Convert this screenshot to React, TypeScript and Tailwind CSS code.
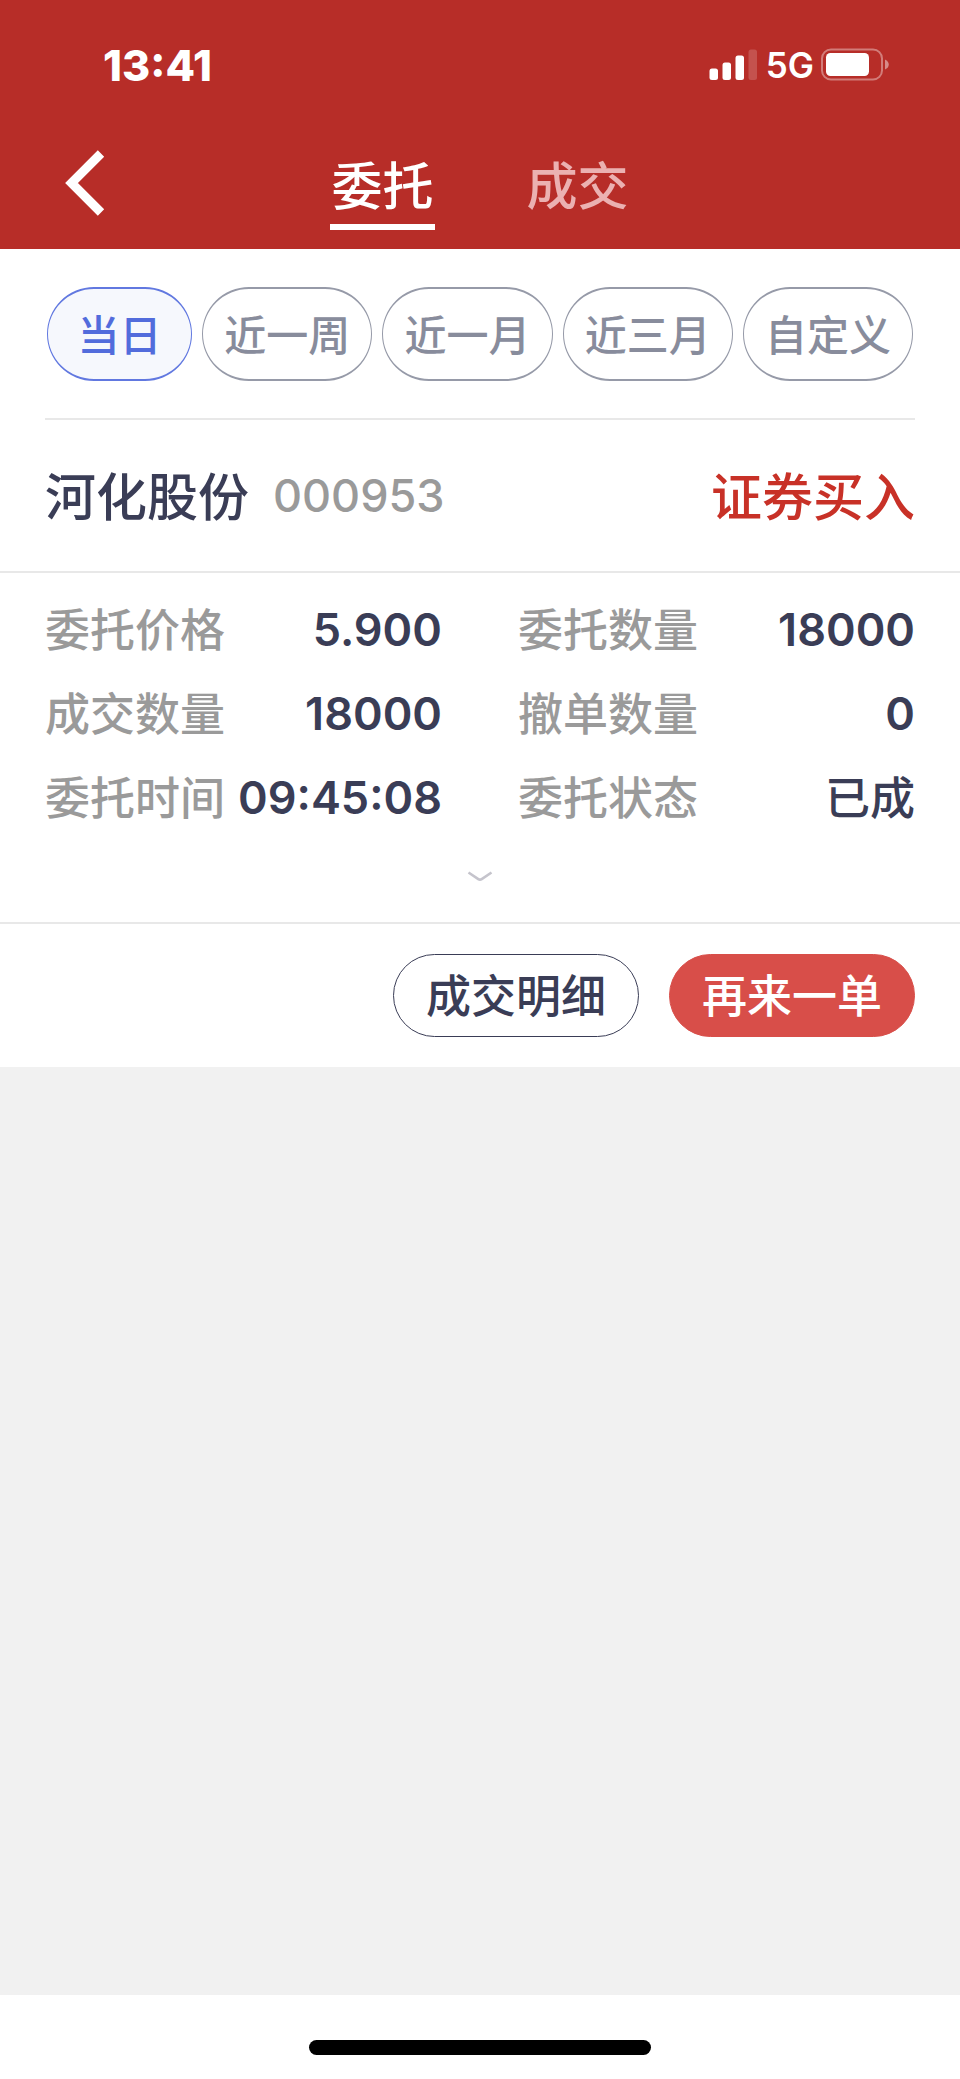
import { useState } from "react";
import clsx from "clsx";

const tabs = ["委托", "成交"];

const ranges = ["当日", "近一周", "近一月", "近三月", "自定义"];

const order = {
  name: "河化股份",
  code: "000953",
  side: "证券买入",
  status: "已成",
  details: [
    { label: "委托价格", value: "5.900" },
    { label: "委托数量", value: "18000" },
    { label: "成交数量", value: "18000" },
    { label: "撤单数量", value: "0" },
    { label: "委托时间", value: "09:45:08" },
  ],
};

function SignalIcon() {
  return (
    <svg width="48" height="32" viewBox="0 0 48 32" fill="#fff" aria-hidden="true">
      <rect x="0.5" y="19.5" width="8.5" height="11.5" rx="2.5" />
      <rect x="13.5" y="13.5" width="8.5" height="17.5" rx="2.5" />
      <rect x="26.5" y="6.5" width="8.5" height="24.5" rx="2.5" />
      <rect x="39.5" y="0.5" width="8.5" height="30.5" rx="2.5" opacity="0.18" />
    </svg>
  );
}

function BatteryIcon() {
  return (
    <svg width="69" height="34" viewBox="0 0 69 34" aria-hidden="true">
      <rect
        x="2"
        y="1.5"
        width="60"
        height="30"
        rx="9"
        fill="none"
        stroke="#fff"
        strokeOpacity="0.38"
        strokeWidth="2"
      />
      <rect x="6" y="5" width="43" height="23" rx="4.5" fill="#fff" />
      <path d="M65 11.500c5 2 5 8 0 10z" fill="#fff" fillOpacity="0.45" />
    </svg>
  );
}

function StatusBar() {
  return (
    <div className="flex h-[129px] items-center justify-between pl-[103px] pr-[71px]">
      <span className="text-[43px] font-extrabold leading-[48px]">13:41</span>
      <div className="flex items-center">
        <SignalIcon />
        <span className="ml-[9px] text-[35px] font-semibold leading-[40px]">5G</span>
        <span className="ml-1.5">
          <BatteryIcon />
        </span>
      </div>
    </div>
  );
}

function OrderCard() {
  const [expanded, setExpanded] = useState(false);

  return (
    <article className="bg-white">
      <div className="flex h-[153px] items-center justify-between border-b-2 border-[#e8e8e8] px-[45px] leading-[72px]">
        <div className="flex items-center gap-6">
          <h2 className="pt-1 text-[51px] text-[#3a3d56]">{order.name}</h2>
          <span className="text-[45px] text-[#9a9a9a]">{order.code}</span>
        </div>
        <span className="pt-1 text-[51px] text-[#c83127]">{order.side}</span>
      </div>

      <dl className="grid grid-cols-2 gap-x-[76px] px-[45px] pt-[15px] text-[45px]">
        {order.details.map((item) => (
          <div key={item.label} className="flex justify-between whitespace-nowrap">
            <dt className="pt-0.5 leading-[82px] text-[#9a9a9a]">{item.label}</dt>
            <dd className="font-semibold leading-[84px] text-[#3a3d56]">{item.value}</dd>
          </div>
        ))}
        <div className="flex justify-between whitespace-nowrap pt-0.5 leading-[82px]">
          <dt className="text-[#9a9a9a]">委托状态</dt>
          <dd className="text-[#3a3d56]">{order.status}</dd>
        </div>
      </dl>

      <button
        type="button"
        aria-label="展开"
        aria-expanded={expanded}
        onClick={() => setExpanded(!expanded)}
        className="flex h-[82px] w-full items-start justify-center pt-[31px]"
      >
        <svg
          width="26"
          height="12"
          viewBox="0 0 26 12"
          fill="none"
          stroke="#c5c4cc"
          strokeWidth="2.6"
          className={clsx(expanded && "rotate-180")}
        >
          <path d="M1.5 1.5l9.8 6.6q1.7 1.1 3.4 0l9.8-6.6" />
        </svg>
      </button>

      <div className="flex justify-end gap-[30px] border-t-2 border-[#e8e8e8] px-[45px] py-[30px] text-[45px] leading-[79px]">
        <button
          type="button"
          className="w-[246px] whitespace-nowrap rounded-full border border-[#3a3d56] pt-0.5 text-[#3a3d56]"
        >
          成交明细
        </button>
        <button
          type="button"
          className="w-[246px] whitespace-nowrap rounded-full border border-[#d84e49] bg-[#d84e49] pt-0.5 text-white"
        >
          再来一单
        </button>
      </div>
    </article>
  );
}

export default function App() {
  const [activeTab, setActiveTab] = useState("委托");
  const [activeRange, setActiveRange] = useState("当日");

  return (
    <div className="flex min-h-screen flex-col bg-[#f1f1f1] font-['Inter','Noto_Sans_CJK_SC',sans-serif] font-medium">
      <header className="bg-[#b72d28] text-white">
        <StatusBar />

        <nav className="grid grid-cols-[1fr_auto_1fr] items-start pb-[19px] pt-[18px]">
          <button type="button" aria-label="返回" className="flex h-[72px] items-center pl-[65px]">
            <svg width="40" height="66" viewBox="0 0 40 66" fill="none" stroke="#fff" strokeWidth="9">
              <path d="M36 3.5L6.500 33L36 62.500" />
            </svg>
          </button>

          <div className="flex gap-[90px]">
            {tabs.map((tab) => (
              <button
                key={tab}
                type="button"
                onClick={() => setActiveTab(tab)}
                className={clsx(
                  "w-[105px] border-b-[6px] pb-px pt-1 text-[51px] leading-[72px]",
                  activeTab === tab ? "border-white" : "border-transparent text-[#ebb1b1]"
                )}
              >
                {tab}
              </button>
            ))}
          </div>
        </nav>
      </header>

      <main className="flex-1">
        <section className="bg-white px-[45px]">
          <div className="grid grid-cols-[145fr_repeat(4,170fr)] gap-[10px] border-b-2 border-[#e8e8e8] px-[2px] pb-[37px] pt-[38px]">
            {ranges.map((range) => (
              <button
                key={range}
                type="button"
                onClick={() => setActiveRange(range)}
                className={clsx(
                  "whitespace-nowrap rounded-full border-x border-y-2 pt-1 text-[42px] leading-[86px]",
                  activeRange === range
                    ? "border-[#6178e0] bg-[#f6f8fd] text-[#526cdc]"
                    : "border-[#969aa8] text-[#888c9c]"
                )}
              >
                {range}
              </button>
            ))}
          </div>
        </section>

        <OrderCard />
      </main>

      <footer className="flex h-[84px] justify-center bg-white pt-[45px]">
        <div className="h-[15px] w-[342px] rounded-full bg-black" />
      </footer>
    </div>
  );
}
